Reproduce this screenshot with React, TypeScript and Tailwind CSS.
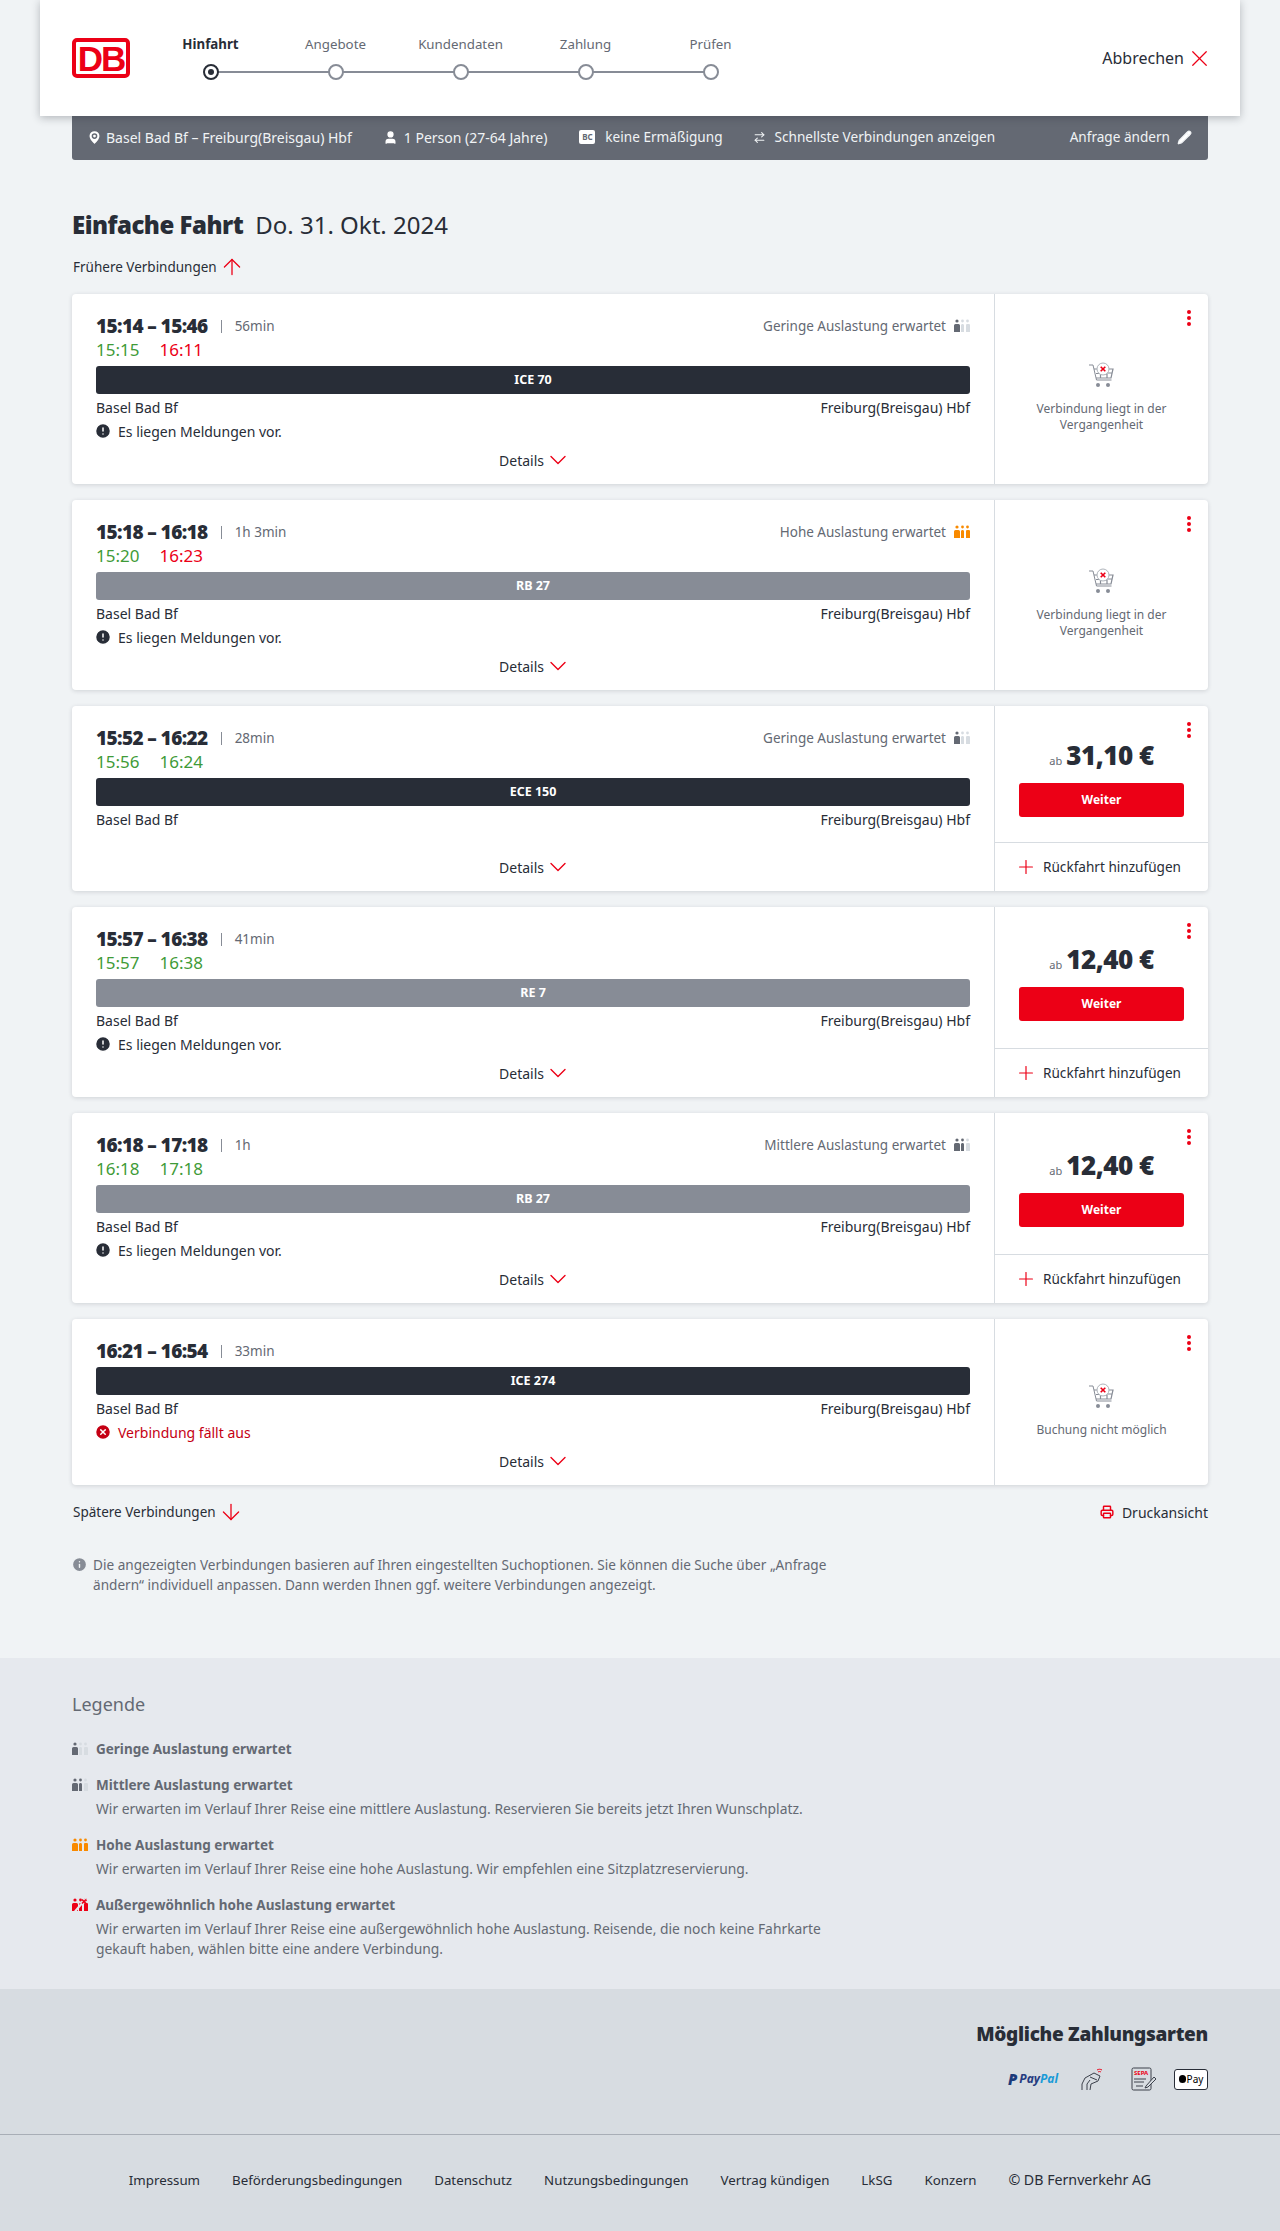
import { ChevronDown, X, Plus, ArrowUp, ArrowDown, MapPin, User, Pencil, ArrowRightLeft, CircleAlert, CircleX, Info, Printer } from "lucide-react";

const RED = "#ec0016";

type Load = "low" | "mid" | "high" | "extreme" | null;

type Conn = {
  times: string;
  dur: string;
  load: Load;
  actual?: [string, string, boolean];
  train: string;
  dark: boolean;
  msg?: "info" | "cancel";
  price?: string;
  note?: string[];
};

const conns: Conn[] = [
  { times: "15:14 – 15:46", dur: "56min", load: "low", actual: ["15:15", "16:11", true], train: "ICE 70", dark: true, msg: "info", note: ["Verbindung liegt in der", "Vergangenheit"] },
  { times: "15:18 – 16:18", dur: "1h 3min", load: "high", actual: ["15:20", "16:23", true], train: "RB 27", dark: false, msg: "info", note: ["Verbindung liegt in der", "Vergangenheit"] },
  { times: "15:52 – 16:22", dur: "28min", load: "low", actual: ["15:56", "16:24", false], train: "ECE 150", dark: true, price: "31,10 €" },
  { times: "15:57 – 16:38", dur: "41min", load: null, actual: ["15:57", "16:38", false], train: "RE 7", dark: false, msg: "info", price: "12,40 €" },
  { times: "16:18 – 17:18", dur: "1h", load: "mid", actual: ["16:18", "17:18", false], train: "RB 27", dark: false, msg: "info", price: "12,40 €" },
  { times: "16:21 – 16:54", dur: "33min", load: null, train: "ICE 274", dark: true, msg: "cancel", note: ["Buchung nicht möglich"] },
];

const loadText: Record<string, string> = {
  low: "Geringe Auslastung erwartet",
  mid: "Mittlere Auslastung erwartet",
  high: "Hohe Auslastung erwartet",
};

function LoadIcon({ level }: { level: Exclude<Load, null> }) {
  const on = level === "low" ? 1 : level === "mid" ? 2 : 3;
  const color = level === "high" ? "#f98a00" : level === "extreme" ? RED : "#646973";
  const fill = (i: number) => (i < on ? color : "#d7dce1");
  return (
    <svg width="16" height="14" viewBox="0 0 16 14" className="shrink-0">
      <circle cx="3" cy="2" r="1.6" fill={fill(0)} />
      <path d="M0 6.5a1.5 1.5 0 0 1 1.5-1.5h3A1.5 1.5 0 0 1 6 6.5V13H0z" fill={fill(0)} />
      <circle cx="8.5" cy="2" r="1.4" fill={fill(1)} />
      <path d="M7 6.5A1.3 1.3 0 0 1 8.3 5h.4A1.3 1.3 0 0 1 10 6.5V13H7z" fill={fill(1)} />
      <circle cx="13.5" cy="2" r="1.4" fill={fill(2)} />
      <path d="M12 6.5A1.3 1.3 0 0 1 13.3 5h1.4A1.3 1.3 0 0 1 16 6.5V13h-4z" fill={fill(2)} />
      {level === "extreme" && <path d="M3 13.5 14 .5" stroke="#e6e9ee" strokeWidth="2.2" />}
      {level === "extreme" && <path d="M10 1.5l4 4M14 1.5l-4 4" stroke={RED} strokeWidth="1.6" />}
    </svg>
  );
}

function CartIcon() {
  return (
    <svg width="27" height="27" viewBox="0 0 27 27" fill="none" className="shrink-0">
      <path d="M1 3h4l3.5 15h15" stroke="#878c96" strokeWidth="1" />
      <path d="M6 7h19l-2 9H8M8 11.5h4.5v4M13 12h6v4M19.5 11h4" stroke="#878c96" strokeWidth="1.2" />
      <circle cx="10" cy="23" r="2" fill="#878c96" />
      <circle cx="20" cy="23" r="2" fill="#878c96" />
      <circle cx="15" cy="7" r="6" fill="#fff" stroke="#afb4bb" strokeWidth="1" />
      <path d="M12.7 4.7l4.6 4.6M17.3 4.7l-4.6 4.6" stroke={RED} strokeWidth="1.6" />
    </svg>
  );
}

function Dots() {
  return (
    <div className="absolute right-[17px] top-[16px] flex flex-col gap-[2px]">
      <span className="h-1 w-1 rounded-full bg-[#ec0016]" />
      <span className="h-1 w-1 rounded-full bg-[#ec0016]" />
      <span className="h-1 w-1 rounded-full bg-[#ec0016]" />
    </div>
  );
}

function ConnCard({ c }: { c: Conn }) {
  return (
    <div className={`flex rounded bg-white shadow-[0_1px_4px_rgba(40,45,55,0.16)] ${c.msg ? "" : "min-h-[185px]"}`}>
      <div className="flex w-[922px] flex-col px-6 pt-5 pb-[9px]">
        <div className="flex h-6 items-center">
          <span className="text-[19px] font-black tracking-[-0.6px] text-[#282d37]">{c.times}</span>
          <span className="mx-[13px] h-[13px] w-px bg-[#878c96]" />
          <span className="text-[13.5px] text-[#646973]">{c.dur}</span>
          {c.load && (
            <div className="ml-auto flex items-center gap-2 text-[13.5px] text-[#646973]">
              {loadText[c.load]}
              <LoadIcon level={c.load} />
            </div>
          )}
        </div>
        {c.actual && (
          <div className="flex h-6 items-center gap-5 text-[17px] text-[#3f9b38]">
            <span>{c.actual[0]}</span>
            <span className={c.actual[2] ? "text-[#ec0016]" : ""}>{c.actual[1]}</span>
          </div>
        )}
        <div className={`mt-1 flex h-7 items-center justify-center rounded-[3px] text-[12.5px] font-bold text-white ${c.dark ? "bg-[#282d37]" : "bg-[#878c96]"}`}>
          {c.train}
        </div>
        <div className="flex h-7 items-center justify-between pb-[2px] text-[14px] text-[#282d37]">
          <span>Basel Bad Bf</span>
          <span>Freiburg(Breisgau) Hbf</span>
        </div>
        {c.msg === "info" && (
          <div className="mb-[5px] flex h-5 items-center gap-[6px] pb-[2px] text-[14px] text-[#282d37]">
            <CircleAlert size={18} fill="#282d37" stroke="#fff" strokeWidth={2} className="-ml-[2px]" />
            Es liegen Meldungen vor.
          </div>
        )}
        {c.msg === "cancel" && (
          <div className="mb-[5px] flex h-5 items-center gap-[6px] pb-[2px] text-[14px] text-[#c50014]">
            <CircleX size={18} fill="#c50014" stroke="#fff" strokeWidth={2} className="-ml-[2px]" />
            Verbindung fällt aus
          </div>
        )}
        <div className="mt-auto flex h-7 items-center justify-center pb-[2px] pl-[5px] text-[14px] text-[#282d37]">
          Details
          <ChevronDown size={28} color={RED} strokeWidth={1.2} className="-my-1" />
        </div>
      </div>
      <div className="relative flex w-[214px] flex-col border-l border-[#d7dce1]">
        <Dots />
        {c.price ? (
          <>
            <div className="flex flex-1 flex-col items-center justify-center pt-2">
              <div className="flex items-baseline gap-1 text-[#282d37]">
                <span className="text-[11px] text-[#646973]">ab</span>
                <span className="text-[26px] leading-8 font-black tracking-[-0.5px]">{c.price}</span>
              </div>
              <div className="mt-3 flex h-[34px] w-[165px] items-center justify-center rounded-[3px] bg-[#ec0016] text-[12px] font-bold text-white">
                Weiter
              </div>
            </div>
            <div className="flex h-[49px] items-center gap-[6px] border-t border-[#d7dce1] pl-[20px] text-[13.6px] text-[#282d37]">
              <Plus size={22} color={RED} strokeWidth={1.3} />
              Rückfahrt hinzufügen
            </div>
          </>
        ) : (
          <div className="flex flex-1 flex-col items-center justify-center pt-4 text-center text-[12px] leading-4 text-[#646973]">
            <CartIcon />
            <div className="mt-3">
              {c.note?.map((l) => <div key={l}>{l}</div>)}
            </div>
          </div>
        )}
      </div>
    </div>
  );
}

const steps = ["Hinfahrt", "Angebote", "Kundendaten", "Zahlung", "Prüfen"];

function Header() {
  return (
    <div className="relative z-10 mx-10 flex h-[116px] items-center bg-white px-8 shadow-[0_2px_8px_rgba(40,45,55,0.3)]">
      <div className="flex h-10 w-[58px] items-center justify-center overflow-hidden rounded-[5px] border-[4px] border-[#ec0016] bg-white">
        <span className="font-['Liberation_Sans',sans-serif] text-[35px] leading-none font-bold tracking-[-2px] text-[#ec0016]">DB</span>
      </div>
      <div className="ml-[18px] flex">
        {steps.map((s, i) => (
          <div key={s} className="relative flex w-[125px] flex-col items-center">
            <span className={`h-5 text-[13.3px] leading-4 ${i === 0 ? "font-bold text-[#282d37]" : "text-[#646973]"}`}>{s}</span>
            {i < 4 && <span className="absolute top-[35px] left-[62px] h-[2px] w-[125px] bg-[#878c96]" />}
            <span className={`relative mt-[8px] flex h-4 w-4 items-center justify-center rounded-full border-2 bg-white ${i === 0 ? "border-[#282d37]" : "border-[#878c96]"}`}>
              {i === 0 && <span className="h-[6px] w-[6px] rounded-full bg-[#282d37]" />}
            </span>
          </div>
        ))}
      </div>
      <div className="ml-auto flex items-center gap-[2px] text-[16px] text-[#282d37]">
        Abbrechen
        <X size={27} color={RED} strokeWidth={1.1} className="-mr-[5px]" />
      </div>
    </div>
  );
}

function InfoBar() {
  return (
    <div className="mx-[72px] flex h-11 items-center rounded-b-[3px] bg-[#646973] pr-4 pb-[2px] pl-[14px] text-[14px] text-[#f0f3f5]">
      <MapPin size={17} fill="#fff" stroke="#646973" strokeWidth={2} className="mr-[3px]" />
      Basel Bad Bf – Freiburg(Breisgau) Hbf
      <User size={15} fill="#fff" stroke="#fff" className="mr-[6px] ml-[31px]" />
      1 Person (27-64 Jahre)
      <span className="mr-[10px] ml-[32px] flex h-[14px] w-4 items-center justify-center rounded-[2px] bg-white text-[8px] font-bold text-[#646973]">BC</span>
      <span className="text-[13.6px]">keine Ermäßigung</span>
      <ArrowRightLeft size={13} className="mr-[9px] ml-[30px]" />
      <span className="text-[13.6px]">Schnellste Verbindungen anzeigen</span>
      <span className="ml-auto text-[13.6px]">Anfrage ändern</span>
      <Pencil size={15} fill="#fff" className="ml-[7px]" />
    </div>
  );
}

function Legend() {
  const rows: { level: Exclude<Load, null>; title: string; lines: string[] }[] = [
    { level: "low", title: "Geringe Auslastung erwartet", lines: [] },
    { level: "mid", title: "Mittlere Auslastung erwartet", lines: ["Wir erwarten im Verlauf Ihrer Reise eine mittlere Auslastung. Reservieren Sie bereits jetzt Ihren Wunschplatz."] },
    { level: "high", title: "Hohe Auslastung erwartet", lines: ["Wir erwarten im Verlauf Ihrer Reise eine hohe Auslastung. Wir empfehlen eine Sitzplatzreservierung."] },
    { level: "extreme", title: "Außergewöhnlich hohe Auslastung erwartet", lines: ["Wir erwarten im Verlauf Ihrer Reise eine außergewöhnlich hohe Auslastung. Reisende, die noch keine Fahrkarte", "gekauft haben, wählen bitte eine andere Verbindung."] },
  ];
  return (
    <div className="bg-[#e6e9ee] px-[72px] pt-8 pb-[30px] text-[#646973]">
      <div className="h-7 text-[18px] leading-7">Legende</div>
      <div className="mt-[21px] flex flex-col gap-4">
        {rows.map((r) => (
          <div key={r.level}>
            <div className="flex h-5 items-center gap-2 text-[13.5px] font-bold">
              <LoadIcon level={r.level} />
              {r.title}
            </div>
            {r.lines.length > 0 && (
              <div className="mt-1 pl-6 text-[13.85px] leading-5">
                {r.lines.map((l) => <div key={l}>{l}</div>)}
              </div>
            )}
          </div>
        ))}
      </div>
    </div>
  );
}

function Payment() {
  return (
    <div className="border-b border-[#a8aeb6] bg-[#d7dce1] px-[72px] pt-[31px] pb-[43px]">
      <div className="h-7 text-right text-[19px] leading-7 font-black tracking-[-0.3px] text-[#282d37]">Mögliche Zahlungsarten</div>
      <div className="mt-[19px] flex h-6 items-center justify-end">
        <span className="flex items-center gap-[2px] text-[12px] font-bold italic">
          <span className="text-[15px] font-black text-[#1b3a7a]">P</span>
          <span className="text-[#253b80]">Pay</span>
          <span className="-ml-[2px] text-[#1a9bd7]">Pal</span>
        </span>
        <svg width="24" height="24" viewBox="0 0 24 24" fill="none" stroke="#3c414b" strokeWidth="1" className="ml-[22px]">
          <path d="M2 23v-6l3-6 9-5 6 3-2 5-7 3-1 6M7 23v-6l3-4M10 10l7 3" />
          <path d="M17 3c2-1 3-1 5 0M18 5c1-.6 2-.6 3 0" stroke={RED} />
        </svg>
        <svg width="26" height="24" viewBox="0 0 26 24" fill="none" stroke="#3c414b" className="ml-[27px]">
          <rect x="1" y="1" width="19" height="22" rx="1.5" />
          <text x="3" y="8" fontSize="6" fontWeight="700" fill={RED} stroke="none">SEPA</text>
          <path d="M3 12h12M3 15h10M5 19h7" />
          <path d="M15 19l8-9 2 2-8 8-3 1z" fill="#d7dce1" />
        </svg>
        <div className="ml-[17px] flex h-[21px] w-[34px] items-center justify-center gap-px rounded-[3px] border border-[#282d37] bg-white text-[10px] text-[#000]">
          <span className="h-[8px] w-[7px] rounded-full bg-black" />
          Pay
        </div>
      </div>
    </div>
  );
}

export default function App() {
  const footer = ["Impressum", "Beförderungsbedingungen", "Datenschutz", "Nutzungsbedingungen", "Vertrag kündigen", "LkSG", "Konzern"];
  return (
    <div className="min-h-[2231px] bg-[#f0f3f5] font-['Noto_Sans',sans-serif] text-[#282d37]">
      <Header />
      <InfoBar />
      <div className="px-[72px]">
        <div className="mt-[49px] flex h-8 items-center gap-3 text-[24px]">
          <span className="font-black tracking-[-0.5px]">Einfache Fahrt</span>
          <span>Do. 31. Okt. 2024</span>
        </div>
        <div className="mt-[14px] flex h-6 items-center gap-[2px] pl-px text-[13.5px]">
          Frühere Verbindungen
          <ArrowUp size={26} color={RED} strokeWidth={1.2} className="-my-1" />
        </div>
        <div className="mt-[15px] flex flex-col gap-4">
          {conns.map((c) => <ConnCard key={c.times} c={c} />)}
        </div>
        <div className="mt-[15px] flex h-6 items-center justify-between pl-px text-[13.5px]">
          <div className="flex items-center gap-[2px]">
            Spätere Verbindungen
            <ArrowDown size={26} color={RED} strokeWidth={1.2} className="-my-1" />
          </div>
          <div className="flex items-center gap-2">
            <Printer size={14} color={RED} strokeWidth={2.5} />
            <span className="text-[14px]">Druckansicht</span>
          </div>
        </div>
        <div className="mt-[31px] flex gap-[5px] pb-[63px] text-[13.6px] leading-5 text-[#646973]">
          <Info size={17} fill="#878c96" stroke="#f0f3f5" strokeWidth={2} className="mt-[1px] -ml-[1px] shrink-0" />
          <div>
            Die angezeigten Verbindungen basieren auf Ihren eingestellten Suchoptionen. Sie können die Suche über „Anfrage
            <br />
            ändern“ individuell anpassen. Dann werden Ihnen ggf. weitere Verbindungen angezeigt.
          </div>
        </div>
      </div>
      <Legend />
      <Payment />
      <div className="flex h-[97px] justify-center gap-8 bg-[#d7dce1] pt-[35px] text-[13.3px] leading-5 text-[#282d37]">
        {footer.map((f) => <span key={f}>{f}</span>)}
        <span className="text-[14.2px]">© DB Fernverkehr AG</span>
      </div>
    </div>
  );
}
